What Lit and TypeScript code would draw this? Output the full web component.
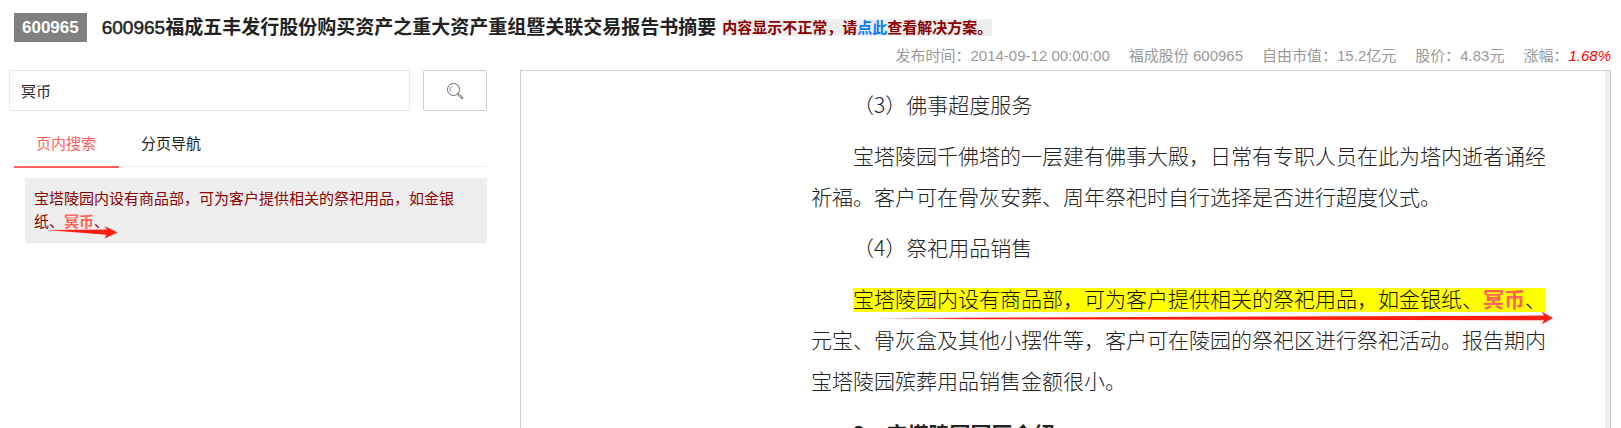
import { LitElement, html, css } from "lit";
import { customElement, property, state } from "lit/decorators.js";

/** Tapered red arrow used to point at a matched phrase. */
@customElement("match-arrow")
class MatchArrow extends LitElement {
  @property() variant = "long";

  static styles = css`
    :host {
      display: block;
      pointer-events: none;
    }
    .arrow {
      display: block;
      width: 100%;
      height: 100%;
    }
  `;

  render() {
    return this.variant === "short"
      ? html`<svg class="arrow" viewBox="0 0 72 14" aria-hidden="true">
          <path d="M0 5 L61 4.400 L58.500 1 L71.500 7.400 L58.500 13.400 L60.500 9.800 Z" fill="#ff1e10" />
        </svg>`
      : html`<svg class="arrow" viewBox="0 0 680 14" preserveAspectRatio="none" aria-hidden="true">
          <defs>
            <linearGradient id="fade" x1="0" x2="1" y1="0" y2="0">
              <stop offset="0" stop-color="#ff1e10" stop-opacity="0" />
              <stop offset="0.14" stop-color="#ff1e10" />
              <stop offset="1" stop-color="#ff1e10" />
            </linearGradient>
          </defs>
          <path d="M0 7 L671 4.600 L668.500 0.600 L680 7 L668.500 13.400 L671 9.200 L0 8 Z" fill="url(#fade)" />
        </svg>`;
  }
}

@customElement("app-root")
class AppRoot extends LitElement {
  @state() private keyword = "冥币";
  @state() private tab = 0;

  static styles = css`
    :host {
      display: flex;
      flex-direction: column;
      height: 100vh;
      overflow: hidden;
      box-sizing: border-box;
      background: #fff;
      color: #222;
      font-family: "Liberation Sans", "Noto Sans CJK SC", sans-serif;
      font-size: 15px;
      text-spacing-trim: space-all;
    }
    * {
      box-sizing: border-box;
    }
    .heading {
      display: flex;
      align-items: center;
      padding: 13px 14px 0;
      white-space: nowrap;
    }
    .code {
      padding: 0 8px;
      background: #808080;
      color: #fff;
      font-size: 17px;
      font-weight: 700;
      line-height: 29px;
    }
    .title {
      margin: 0 6px 0 15px;
      font-size: 19px;
      font-weight: 700;
      line-height: 27px;
    }
    .digits {
      font-weight: 400;
      -webkit-text-stroke: 0.5px currentColor;
    }
    .notice {
      background: #eee;
      color: #8b0000;
      font-weight: 700;
      line-height: 17px;
    }
    .notice a {
      color: #0a7bff;
      text-decoration: none;
    }
    .meta {
      display: flex;
      justify-content: flex-end;
      gap: 19px;
      padding: 0 10px;
      color: #999;
      line-height: 28px;
      white-space: nowrap;
    }
    .rise {
      color: #f00;
      font-style: italic;
    }
    .body {
      display: grid;
      grid-template-columns: 478px minmax(0, 1fr);
      gap: 33px;
      flex: 1;
      min-height: 0;
      padding: 0 10px 0 9px;
    }
    .search {
      display: flex;
      gap: 13px;
    }
    .field {
      flex: 1;
      min-width: 0;
      height: 41px;
      padding: 0 11px;
      border: 1px solid #e8e8e8;
      border-radius: 2px;
      outline: none;
      color: #222;
      font: inherit;
    }
    .go {
      display: grid;
      place-items: center;
      width: 64px;
      height: 41px;
      padding: 0;
      border: 1px solid #ccc;
      border-radius: 2px;
      background: #fff;
    }
    .tabs {
      display: flex;
      height: 56px;
      margin-left: 5px;
      border-bottom: 1px solid #eee;
    }
    .tab {
      height: 57px;
      padding: 10px 23px 0 22px;
      border: 0;
      border-bottom: 2px solid transparent;
      background: none;
      color: #222;
      font: inherit;
      line-height: 23px;
    }
    .tab.active {
      border-color: #ff5e5e;
      color: #ff5e5e;
    }
    .result {
      position: relative;
      margin: 11px 0 0 16px;
      padding: 9px 24px 9px 9px;
      border-bottom: 1px dotted #ddd;
      background: #eee;
      color: #8b0000;
      line-height: 23px;
    }
    .hit {
      color: #ff6459;
      font-weight: 700;
    }
    .short {
      position: absolute;
      left: 21px;
      top: 47px;
      width: 72px;
      height: 14px;
    }
    .viewer {
      display: flex;
      overflow: hidden;
      border: 1px solid #ccc;
      border-bottom: 0;
    }
    .page {
      flex: 1;
      min-width: 0;
      padding: 13px 52px 0 24px;
    }
    .rail {
      width: 5px;
      background: #f0f0f0;
    }
    .text {
      max-width: 742px;
      margin-left: auto;
      color: #222;
      font-family: "Noto Sans CJK SC", sans-serif;
      font-size: 21px;
      font-weight: 300;
      line-height: 41px;
    }
    .text p,
    .text h2 {
      position: relative;
      margin: 0 0 10px;
      font-size: 21px;
      text-indent: 2em;
    }
    .text h2 {
      margin-top: 12px;
      font-weight: 700;
    }
    .mark {
      display: inline-block;
      padding-bottom: 4px;
      background: #ff0;
      color: #111;
      line-height: 20px;
      text-indent: 0;
    }
    .long {
      position: absolute;
      left: 62px;
      top: 33px;
      width: 680px;
      height: 14px;
    }
  `;

  render() {
    return html`
      <header>
        <div class="heading">
          <span class="code">600965</span>
          <h1 class="title"><span class="digits">600965</span>福成五丰发行股份购买资产之重大资产重组暨关联交易报告书摘要</h1>
          <span class="notice">内容显示不正常，请<a href="#help">点此</a>查看解决方案。</span>
        </div>
        <div class="meta">
          <span>发布时间：2014-09-12 00:00:00</span>
          <span>福成股份 600965</span>
          <span>自由市值：15.2亿元</span>
          <span>股价：4.83元</span>
          <span>涨幅：<span class="rise">1.68%</span></span>
        </div>
      </header>
      <main class="body">
        <aside>
          <form class="search" @submit=${(e: Event) => e.preventDefault()}>
            <input
              class="field"
              aria-label="搜索"
              .value=${this.keyword}
              @input=${(e: Event) => (this.keyword = (e.target as HTMLInputElement).value)}
            />
            <button class="go" aria-label="搜索">
              <svg width="18" height="18" viewBox="0 0 18 18" fill="none" stroke="#666">
                <circle cx="7.500" cy="7.500" r="6" />
                <path d="M6.500 4 A3.800 3.800 0 0 0 4.600 9.500" stroke="#5a8fc8" stroke-width="0.900" />
                <path d="M11.700 12.900 L13 11.600 L17.200 15.800 L15.900 17.100 Z" stroke-width="0.900" fill="#ccc" />
              </svg>
            </button>
          </form>
          <div class="tabs" role="tablist">
            ${["页内搜索", "分页导航"].map(
              (name, i) => html`<button
                class="tab ${this.tab === i ? "active" : ""}"
                role="tab"
                aria-selected=${this.tab === i}
                @click=${() => (this.tab = i)}
              >${name}</button>`
            )}
          </div>
          <div class="result">
            宝塔陵园内设有商品部，可为客户提供相关的祭祀用品，如金银纸、<span class="hit">冥币</span>、
            <match-arrow class="short" variant="short"></match-arrow>
          </div>
        </aside>
        <section class="viewer">
          <div class="page">
            <article class="text">
              <p>（3）佛事超度服务</p>
              <p>宝塔陵园千佛塔的一层建有佛事大殿，日常有专职人员在此为塔内逝者诵经祈福。客户可在骨灰安葬、周年祭祀时自行选择是否进行超度仪式。</p>
              <p>（4）祭祀用品销售</p>
              <p><span class="mark">宝塔陵园内设有商品部，可为客户提供相关的祭祀用品，如金银纸、<span class="hit">冥币</span>、</span>元宝、骨灰盒及其他小摆件等，客户可在陵园的祭祀区进行祭祀活动。报告期内宝塔陵园殡葬用品销售金额很小。<match-arrow class="long"></match-arrow></p>
              <h2>2、宝塔陵园园区介绍</h2>
            </article>
          </div>
          <div class="rail"></div>
        </section>
      </main>
    `;
  }
}
